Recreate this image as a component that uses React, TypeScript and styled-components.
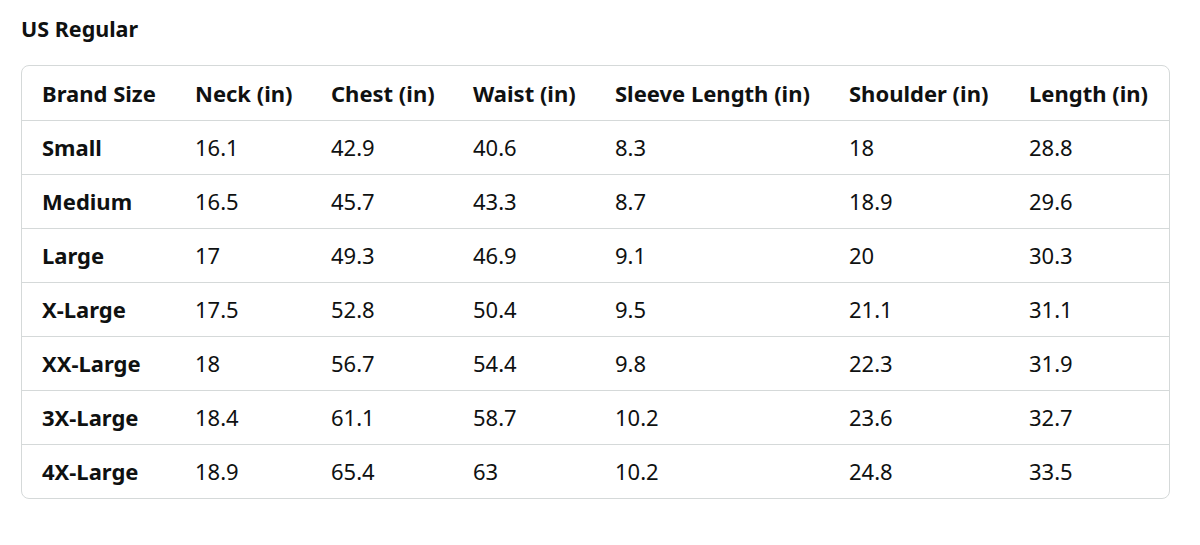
import React from "react";
import styled, { createGlobalStyle } from "styled-components";

const Global = createGlobalStyle`
  html, body { margin: 0; padding: 0; background: #ffffff; }
  body { font-family: "Noto Sans", "Open Sans", Arial, sans-serif; color: #0f1111; }
`;

const Page = styled.div`
  padding: 14px 30px 0 21px;
  width: 1200px;
  box-sizing: border-box;
`;

const Title = styled.h2`
  margin: 0 0 21px 0;
  font-size: 21.5px;
  font-weight: 700;
  line-height: 30px;
`;

const Frame = styled.div`
  width: 1149px;
  border: 1px solid #d5d9d9;
  border-radius: 8px;
  overflow: hidden;
  box-sizing: border-box;
`;

const Table = styled.table`
  width: 100%;
  border-collapse: collapse;
  table-layout: fixed;
`;

const Row = styled.tr`
  height: 54px;
  & + & > * { border-top: 1px solid #d5d9d9; }
`;

const Cell = styled.td<{ $bold?: boolean }>`
  padding: 0 0 0 20px;
  font-size: 22px;
  font-weight: ${(p) => (p.$bold ? 700 : 400)};
  text-align: left;
  vertical-align: middle;
  white-space: nowrap;
`;

const widths = [153, 136, 142, 142, 234, 180, 160];
const headers = ["Brand Size", "Neck (in)", "Chest (in)", "Waist (in)", "Sleeve Length (in)", "Shoulder (in)", "Length (in)"];
const rows = [
  ["Small", "16.1", "42.9", "40.6", "8.3", "18", "28.8"],
  ["Medium", "16.5", "45.7", "43.3", "8.7", "18.9", "29.6"],
  ["Large", "17", "49.3", "46.9", "9.1", "20", "30.3"],
  ["X-Large", "17.5", "52.8", "50.4", "9.5", "21.1", "31.1"],
  ["XX-Large", "18", "56.7", "54.4", "9.8", "22.3", "31.9"],
  ["3X-Large", "18.4", "61.1", "58.7", "10.2", "23.6", "32.7"],
  ["4X-Large", "18.9", "65.4", "63", "10.2", "24.8", "33.5"],
];

export default function App() {
  return (
    <Page>
      <Global />
      <Title>US Regular</Title>
      <Frame>
        <Table>
          <colgroup>
            {widths.map((w, i) => (
              <col key={i} style={{ width: w }} />
            ))}
          </colgroup>
          <tbody>
            <Row>
              {headers.map((h) => (
                <Cell as="th" key={h} $bold>
                  {h}
                </Cell>
              ))}
            </Row>
            {rows.map((r) => (
              <Row key={r[0]}>
                {r.map((v, i) => (
                  <Cell key={i} $bold={i === 0}>
                    {v}
                  </Cell>
                ))}
              </Row>
            ))}
          </tbody>
        </Table>
      </Frame>
    </Page>
  );
}
